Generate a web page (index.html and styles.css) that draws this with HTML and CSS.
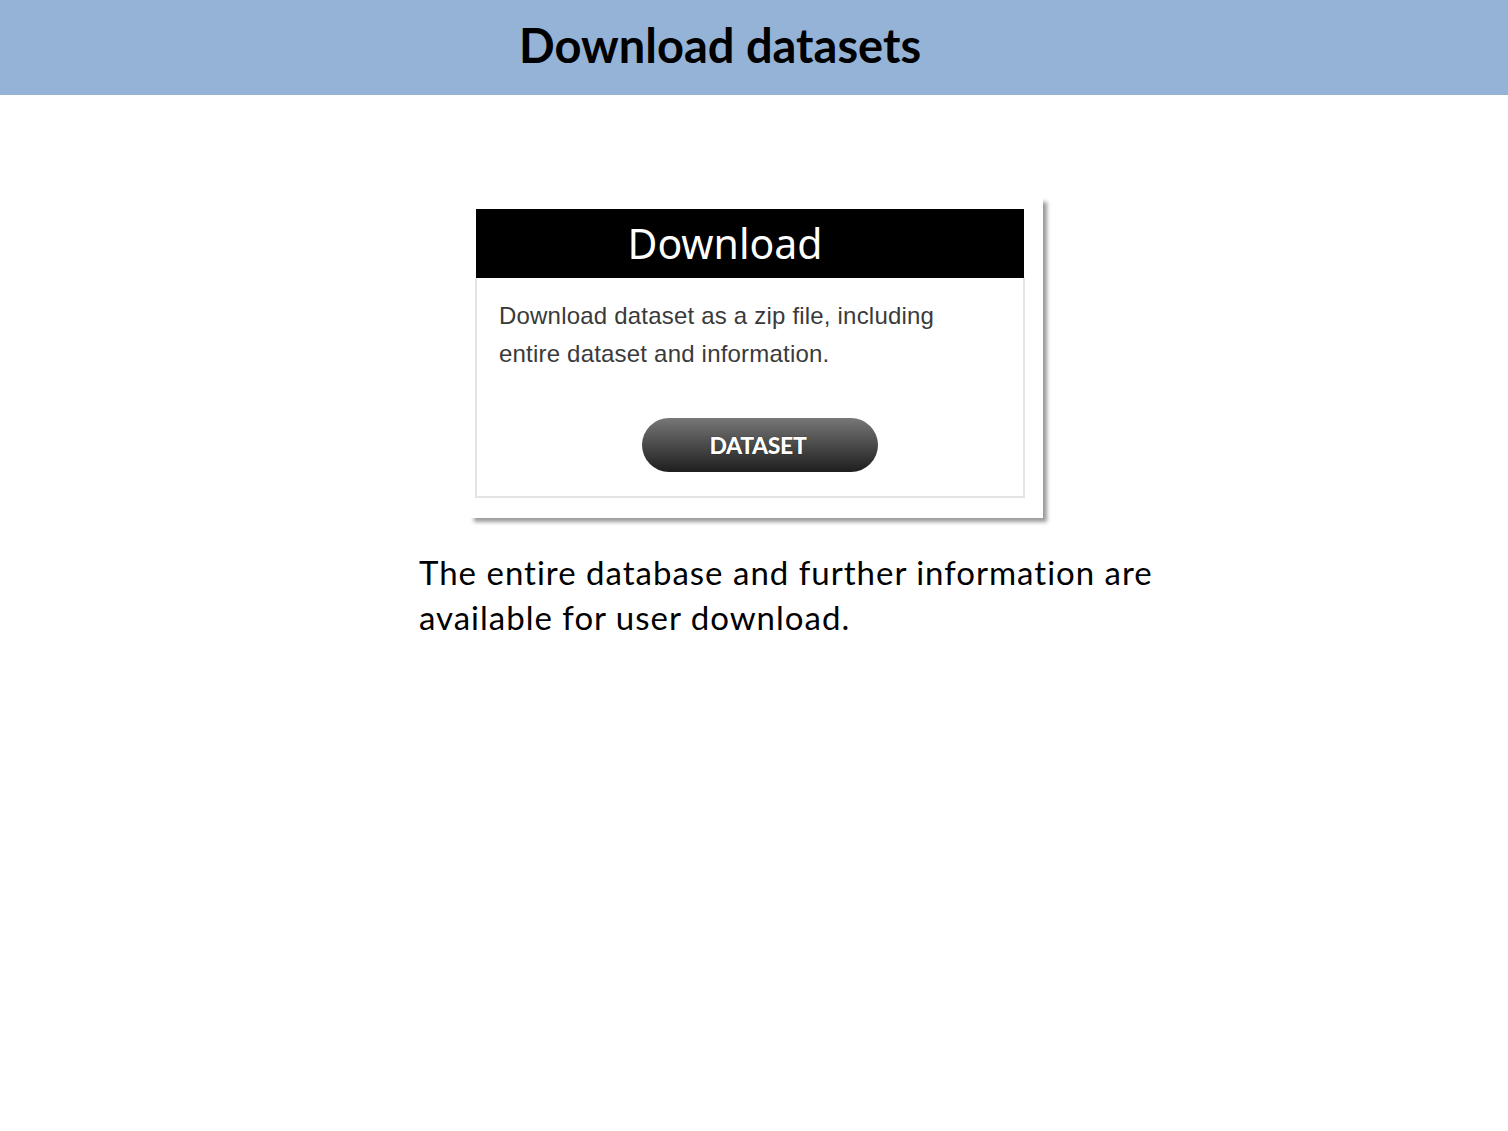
FILE: index.html
```html
<!DOCTYPE html>
<html>
<head>
<meta charset="utf-8">
<link rel="stylesheet" href="styles.css">
</head>
<body>
<header class="topbar"><h1 class="title">Download datasets</h1></header>
<main class="content">
  <div class="frame">
    <div class="card">
      <div class="card-head">Download</div>
      <div class="card-body">
        <p class="card-text">Download dataset as a zip file, including entire dataset and information.</p>
        <div class="btn-row"><span class="btn">DATASET</span></div>
      </div>
    </div>
  </div>
  <p class="desc">The entire database and further information are available for user download.</p>
</main>
</body>
</html>
```
FILE: styles.css
```css
html, body { margin: 0; padding: 0; background: #fff; }
body { width: 1508px; height: 1131px; overflow: hidden; }
.topbar {
  height: 95px;
  background: #95b3d7;
  display: flex;
  align-items: center;
  padding-left: 519px;
  box-sizing: border-box;
}
.title {
  margin: 0;
  font-family: Lato, "Open Sans", sans-serif;
  font-weight: 700;
  font-size: 47px;
  letter-spacing: 0;
  color: #000;
  line-height: 1;
  padding-bottom: 4px;
}
.content {
  display: flex;
  flex-direction: column;
  padding-top: 103px;
}
.frame {
  margin-left: 470px;
  width: 573px;
  height: 320px;
  background: #fff;
  box-shadow: 4px 4px 4px #9a9a9a;
  padding: 11px 0 0 5px;
  box-sizing: border-box;
}
.card {
  width: 550px;
}
.card-head {
  background: #000;
  height: 69px;
  margin: 0 1px;
  color: #fff;
  font-family: "Noto Sans", sans-serif;
  font-size: 41px;
  line-height: 69px;
  text-align: center;
  padding-right: 50px;
  box-sizing: border-box;
}
.card-body {
  border: 2px solid #e4e4e4;
  border-top: none;
  height: 220px;
  box-sizing: border-box;
  padding: 19px 22px 0;
}
.card-text {
  margin: 0;
  font-family: "Liberation Sans", Arial, sans-serif;
  font-size: 24px;
  letter-spacing: 0.2px;
  line-height: 38px;
  color: #3a3a3a;
  width: 460px;
}
.btn-row {
  display: flex;
  justify-content: center;
  padding-top: 45px;
  padding-left: 20px;
}
.btn {
  width: 236px;
  height: 54px;
  border-radius: 27px;
  background: linear-gradient(#777 0%, #4a4a4a 50%, #1e1e1e 100%);
  color: #fff;
  font-family: Lato, sans-serif;
  font-weight: 900;
  font-size: 23px;
  letter-spacing: -0.4px;
  display: flex;
  align-items: center;
  justify-content: center;
  padding-right: 4px;
  box-sizing: border-box;
  text-shadow: 0 0 1px #000;
}
.desc {
  margin: 32px 0 0 419px;
  width: 800px;
  font-family: Lato, sans-serif;
  font-size: 33px;
  letter-spacing: 1px;
  font-variant-ligatures: none;
  line-height: 45px;
  color: #000;
}
```
